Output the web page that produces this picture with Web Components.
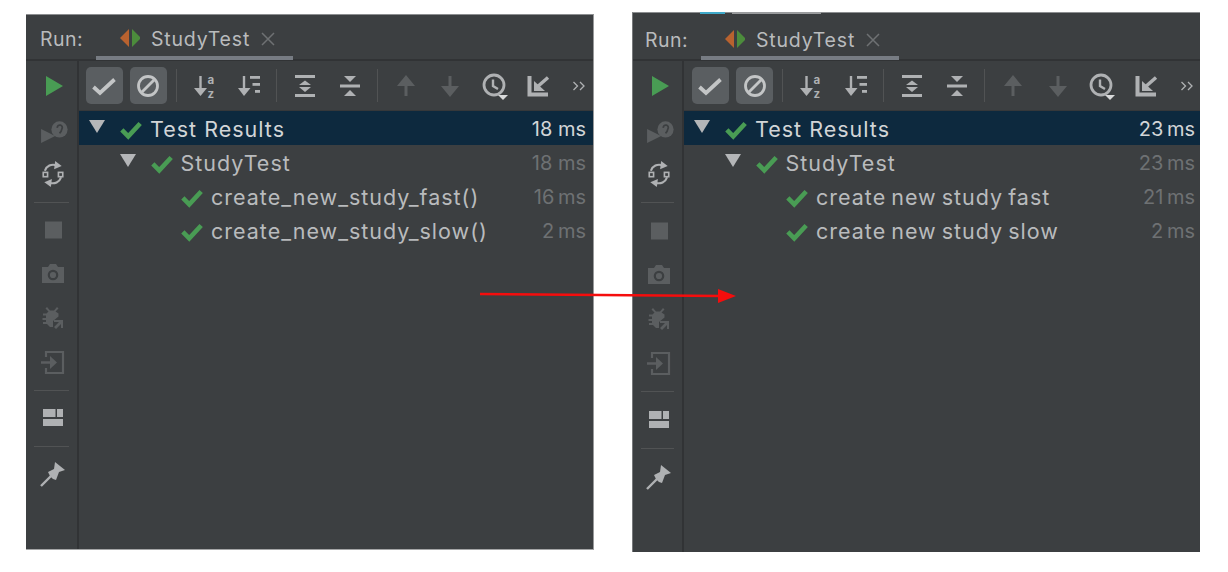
<!DOCTYPE html>
<html>
<head>
<meta charset="utf-8">
<title>StudyTest</title>
<style>
html,body{margin:0;background:#fff;}
body{width:1228px;height:572px;position:relative;overflow:hidden;display:flex;align-items:flex-start;font-family:Inter,"Noto Sans",sans-serif;}
</style>
</head>
<body>
<run-panel style="--top:14px;--left:26px;--h:536px;--strip:51px;--step:44.3px;--pad-right:7px;--tabs-pad:14px;--tabs-down:4px;--line-left:70px;--tab-w:197px;--tb-pad:3px;">
  <tool-strip slot="strip"></tool-strip>
  <test-toolbar slot="toolbar"></test-toolbar>
  <tree-row level="0" label="Test Results" time="18 ms" selected open></tree-row>
  <tree-row level="1" label="StudyTest" time="18 ms" open></tree-row>
  <tree-row level="2" label="create_new_study_fast()" time="16 ms"></tree-row>
  <tree-row level="2" label="create_new_study_slow()" time="2 ms"></tree-row>
</run-panel>
<run-panel cut style="--top:12px;--left:38px;--h:540px;--strip:49px;--step:44.5px;--pad-right:5px;--tabs-pad:12px;--tabs-down:8px;--line-left:68px;--tab-w:198px;--tb-pad:4px;--word:-2px;">
  <tool-strip slot="strip" wide></tool-strip>
  <test-toolbar slot="toolbar"></test-toolbar>
  <tree-row level="0" label="Test Results" time="23 ms" selected open></tree-row>
  <tree-row level="1" label="StudyTest" time="23 ms" open></tree-row>
  <tree-row level="2" label="create new study fast" time="21 ms"></tree-row>
  <tree-row level="2" label="create new study slow" time="2 ms"></tree-row>
</run-panel>
<red-arrow></red-arrow>

<script>
const BRIGHT='#afb1b3'
const DIM='#5b5e60'
const GREEN='#499c54'

// every icon is drawn on its own 24x24 grid
const ICONS={
  play:`<polygon points="5,2 22,12 5,22" fill="${GREEN}"/>`,
  debug:`<polygon points="1,11 14,17.500 1,24" fill="${DIM}"/><circle cx="18" cy="11.500" r="7.500" fill="${DIM}"/><path d="M16 10a2.300 2.300 0 1 1 4.200 1c-.3 2-1 3-2.200 4" stroke="#3c3f41" stroke-width="1.600" fill="none"/>`,
  rerun:`<g fill="none" stroke="${BRIGHT}" stroke-width="2"><path d="M4.500 9a8 8 0 0 1 10.500-5"/><path d="M19.500 15a8 8 0 0 1-10.500 5"/><rect x="3" y="10.500" width="4" height="4" stroke-width="1.500"/><rect x="17" y="10.500" width="4" height="4" stroke-width="1.500"/></g><polygon points="14,0 20,4.500 13,7.500" fill="${BRIGHT}"/><polygon points="10,24 4,19.500 11,16.500" fill="${BRIGHT}"/>`,
  stop:`<rect x="4" y="3.500" width="17" height="17" fill="${DIM}"/>`,
  camera:`<path d="M1 5h6l2-3h6l2 3h6v16H1z" fill="${DIM}"/><circle cx="12" cy="13" r="4.200" fill="none" stroke="#3c3f41" stroke-width="2.200"/>`,
  bug:`<path d="M6 1l3 3.500h4L16 1l1.500 1.500-3 3 3 2v3L12 15v6H9l-3-3H2v-2h3v-2H1.500v-2H5V9.500H2v-2h3.500l2-2-3-3z" fill="${DIM}"/><path d="M13 14h9v8h-2v-4l-5 5-2-2 5-5h-5z" fill="${DIM}"/>`,
  exit:`<path d="M5 7V2h17v21H5v-5" fill="none" stroke="${DIM}" stroke-width="2.200"/><path d="M0 12.500h12" stroke="${DIM}" stroke-width="2.500"/><polygon points="9,6 16,12.500 9,19" fill="${DIM}"/>`,
  layout:`<rect x="2" y="3" width="12.500" height="8" fill="${BRIGHT}"/><rect x="16" y="3" width="6" height="8" fill="${BRIGHT}"/><rect x="2" y="13" width="20" height="7" fill="${BRIGHT}"/>`,
  pin:`<path d="M14 0l10 8-6 2-3 8-3-1-3-3-2-4 6-3z" fill="${BRIGHT}"/><path d="M11 13L0 24" stroke="${BRIGHT}" stroke-width="2.400"/>`,
  check:`<path d="M1.500 13l6.500 6L22.500 5.500" fill="none" stroke="#c3c5c6" stroke-width="3.800"/>`,
  block:`<circle cx="12" cy="12" r="9.500" fill="none" stroke="#c3c5c6" stroke-width="2.800"/><path d="M6 18L18 6" stroke="#c3c5c6" stroke-width="2.800"/>`,
  sortaz:`<path d="M7.500 2v15" stroke="${BRIGHT}" stroke-width="2.400"/><polygon points="1,14 14,14 7.500,22" fill="${BRIGHT}"/><text x="14.500" y="9.700" font-size="11.500" font-weight="700" fill="${BRIGHT}" font-family="Inter,sans-serif">a</text><text x="14.500" y="23.700" font-size="11.500" font-weight="700" fill="${BRIGHT}" font-family="Inter,sans-serif">z</text>`,
  sortdur:`<path d="M7 2v15" stroke="${BRIGHT}" stroke-width="2.400"/><polygon points="1,14 13.500,14 7,22" fill="${BRIGHT}"/><rect x="13" y="2" width="10" height="2.800" fill="${BRIGHT}"/><rect x="15.500" y="9" width="7.500" height="2.800" fill="${BRIGHT}"/><rect x="18" y="16" width="5" height="2.800" fill="${BRIGHT}"/>`,
  expand:`<rect x="2" y="1" width="20" height="3" fill="${BRIGHT}"/><rect x="2" y="20" width="20" height="3" fill="${BRIGHT}"/><polygon points="12,6.500 18,11 6,11" fill="${BRIGHT}"/><polygon points="12,18 18,13 6,13" fill="${BRIGHT}"/>`,
  collapse:`<rect x="2" y="10.500" width="20" height="3" fill="${BRIGHT}"/><polygon points="6,2 18,2 12,8" fill="${BRIGHT}"/><polygon points="6,22 18,22 12,16" fill="${BRIGHT}"/>`,
  up:`<path d="M12 6v16" stroke="${DIM}" stroke-width="3"/><polygon points="12,1 21,12 3,12" fill="${DIM}"/>`,
  down:`<path d="M12 2v16" stroke="${DIM}" stroke-width="3"/><polygon points="12,23 21,12 3,12" fill="${DIM}"/>`,
  clock:`<circle cx="11" cy="11" r="10" fill="none" stroke="${BRIGHT}" stroke-width="2.800"/><path d="M10 5.500V12l5 3" fill="none" stroke="${BRIGHT}" stroke-width="2.400"/><polygon points="15,21 25,21 20,26" fill="#d8d9da"/>`,
  import:`<path d="M2.500 2v18.500H21" fill="none" stroke="${BRIGHT}" stroke-width="4"/><path d="M9 14L21 3.500" stroke="${BRIGHT}" stroke-width="3.500"/><polygon points="7,7 7,17 18,17" fill="${BRIGHT}"/>`,
  more:`<path d="M6.500 8l4 4-4 4M13 8l4 4-4 4" fill="none" stroke="${BRIGHT}" stroke-width="1.300"/>`
}

class ToolIcon extends HTMLElement
{
    constructor()
    {
        super()
        const size=this.getAttribute('size') || 24
        this.attachShadow({ mode: 'open' })
        this.shadowRoot.innerHTML=`
        <style>
        :host{display:flex;align-items:center;justify-content:center;}
        svg{display:block;overflow:visible;}
        </style>
        <svg width="${size}" height="${size}" viewBox="0 0 24 24">${ICONS[this.getAttribute('name')]}</svg>`
    }
}

class ToolStrip extends HTMLElement
{
    constructor()
    {
        super()
        const names=[['play','debug','rerun'],['stop','camera','bug','exit'],['layout'],['pin']]
        const groups=names.map(g=>g.map(n=>`<tool-icon class="item" name="${n}" size="${n=='debug'||n=='rerun'?26:24}"></tool-icon>`).join('')).join('<div class="sep"></div>')
        this.attachShadow({ mode: 'open' })
        this.shadowRoot.innerHTML=`
        <style>
        :host{display:flex;flex-direction:column;align-items:stretch;width:100%;box-sizing:border-box;padding:3px 0 0 2px;}
        .item{height:44px;}
        .sep{height:1px;background:#515354;margin:6px 8px 5px 6px;}
        :host([wide]) .sep{margin-bottom:6px;}
        </style>
        ${groups}`
    }
}

class TestToolbar extends HTMLElement
{
    constructor()
    {
        super()
        const btn=(n,on)=>`<div class="cell"><tool-icon class="${on?'on':''}" name="${n}"></tool-icon></div>`
        this.attachShadow({ mode: 'open' })
        this.shadowRoot.innerHTML=`
        <style>
        :host{display:flex;align-items:center;height:50px;padding-left:var(--tb-pad);box-sizing:border-box;border-bottom:1px solid #36383a;}
        .cell{width:var(--step);flex:none;display:flex;justify-content:center;}
        .cell.last{width:36px;}
        .on{width:37px;height:37px;border-radius:5px;background:#5a5e61;}
        tool-icon:not(.on){width:37px;height:37px;}
        .sep{width:1px;height:33px;margin:0 6px 0 5px;background:#515354;flex:none;}
        </style>
        ${btn('check',1)}${btn('block',1)}<div class="sep"></div>
        ${btn('sortaz')}${btn('sortdur')}<div class="sep"></div>
        ${btn('expand')}${btn('collapse')}<div class="sep"></div>
        ${btn('up')}${btn('down')}${btn('clock')}${btn('import')}
        <div class="cell last"><tool-icon name="more"></tool-icon></div>`
    }
}

class TreeRow extends HTMLElement
{
    constructor()
    {
        super()
        const level=+this.getAttribute('level')
        this.attachShadow({ mode: 'open' })
        this.shadowRoot.innerHTML=`
        <style>
        :host{display:flex;align-items:center;height:34px;color:#b9bbbd;font-size:21.500px;letter-spacing:1px;padding-right:var(--pad-right);}
        :host([level="2"]){word-spacing:-2px;}
        :host([selected]){background:#0d293e;color:#d2d5d7;}
        .indent{flex:none;}
        .arrow{flex:none;width:16px;height:13px;margin:0 15px 0 10px;position:relative;top:-2px;}
        .arrow svg{display:block;}
        .gap{flex:none;width:41px;}
        .check{flex:none;margin-right:8px;position:relative;top:1px;}
        .label{flex:1;white-space:pre;padding-top:1px;}
        .time{color:#6e7173;font-size:20px;letter-spacing:0;word-spacing:var(--word,0);padding-top:1px;}
        :host([level="2"]) .time{word-spacing:-2px;}
        :host([selected]) .time{color:#d2d5d7;}
        </style>
        <div class="indent" style="width:${level*30.5}px"></div>
        ${this.hasAttribute('open')
          ? `<div class="arrow"><svg width="16" height="13"><polygon points="0,0 16,0 8,13" fill="#b4b6b8"/></svg></div>`
          : `<div class="gap"></div>`}
        <svg class="check" width="22" height="22" viewBox="0 0 24 24"><path d="M2 13l7 7L22 6" fill="none" stroke="${GREEN}" stroke-width="5"/></svg>
        <div class="label">${this.getAttribute('label')}</div>
        <div class="time">${this.getAttribute('time')}</div>`
    }
}

class RunPanel extends HTMLElement
{
    constructor()
    {
        super()
        this.attachShadow({ mode: 'open' })
        this.shadowRoot.innerHTML=`
        <style>
        :host{display:flex;flex-direction:column;flex:none;width:568px;height:var(--h);margin-top:var(--top);margin-left:var(--left);background:#3c3f41;color:#b9bbbd;position:relative;box-sizing:border-box;border-top:1px solid #8c8e90;border-right:1px solid #98999a;border-bottom:1px solid #a4a5a6;}
        :host([cut]){border-right:0;border-bottom:0;border-left:1px solid #77797b;}
        .tabs{height:calc(60px - var(--top));flex:none;display:flex;align-items:center;border-bottom:2px solid #313335;box-sizing:border-box;position:relative;padding-left:var(--tabs-pad);padding-top:var(--tabs-down);font-size:19.500px;letter-spacing:.8px;}
        .run{width:69px;flex:none;margin-right:11px;letter-spacing:.5px;}
        .tab-icon{flex:none;margin-right:11px;}
        .close{flex:none;margin-left:11px;}
        .line{position:absolute;left:var(--line-left);width:var(--tab-w);bottom:-1px;height:4px;background:#777c83;}
        .body{flex:1;display:flex;min-height:0;}
        .strip{flex:none;width:var(--strip);border-right:2px solid #313335;}
        .main{flex:1;min-width:0;}
        .sliver{display:none;position:absolute;left:67px;top:-1px;height:2px;width:121px;background:linear-gradient(90deg,#3fa9c9 0 25px,transparent 25px 32px,#9a9c9e 32px 121px);}
        :host([cut]) .sliver{display:block;}
        </style>
        <div class="sliver"></div>
        <div class="tabs">
          <div class="run">Run:</div>
          <svg class="tab-icon" width="20" height="20"><polygon points="9,0 9,18 0,9" fill="#b8622f"/><polygon points="12,0 12,18 21,9" fill="#4c8c3c"/></svg>
          <div>StudyTest</div>
          <svg class="close" width="14" height="14"><path d="M1 1l12 12M13 1L1 13" stroke="#6e7173" stroke-width="1.500"/></svg>
          <div class="line"></div>
        </div>
        <div class="body">
          <div class="strip"><slot name="strip"></slot></div>
          <div class="main"><slot name="toolbar"></slot><slot></slot></div>
        </div>`
    }
}

// the red arrow runs across both panels, so it sits on top of them
class RedArrow extends HTMLElement
{
    constructor()
    {
        super()
        this.attachShadow({ mode: 'open' })
        this.shadowRoot.innerHTML=`
        <style>:host{position:absolute;left:0;top:0;width:1228px;height:572px;pointer-events:none;}</style>
        <svg width="1228" height="572"><path d="M480 294L722 296" stroke="#f50d0d" stroke-width="2.500"/><polygon points="718,289 736,296 718,303" fill="#f50d0d"/></svg>`
    }
}

customElements.define('tool-icon',ToolIcon)
customElements.define('tool-strip',ToolStrip)
customElements.define('test-toolbar',TestToolbar)
customElements.define('tree-row',TreeRow)
customElements.define('run-panel',RunPanel)
customElements.define('red-arrow',RedArrow)
</script>
</body>
</html>
